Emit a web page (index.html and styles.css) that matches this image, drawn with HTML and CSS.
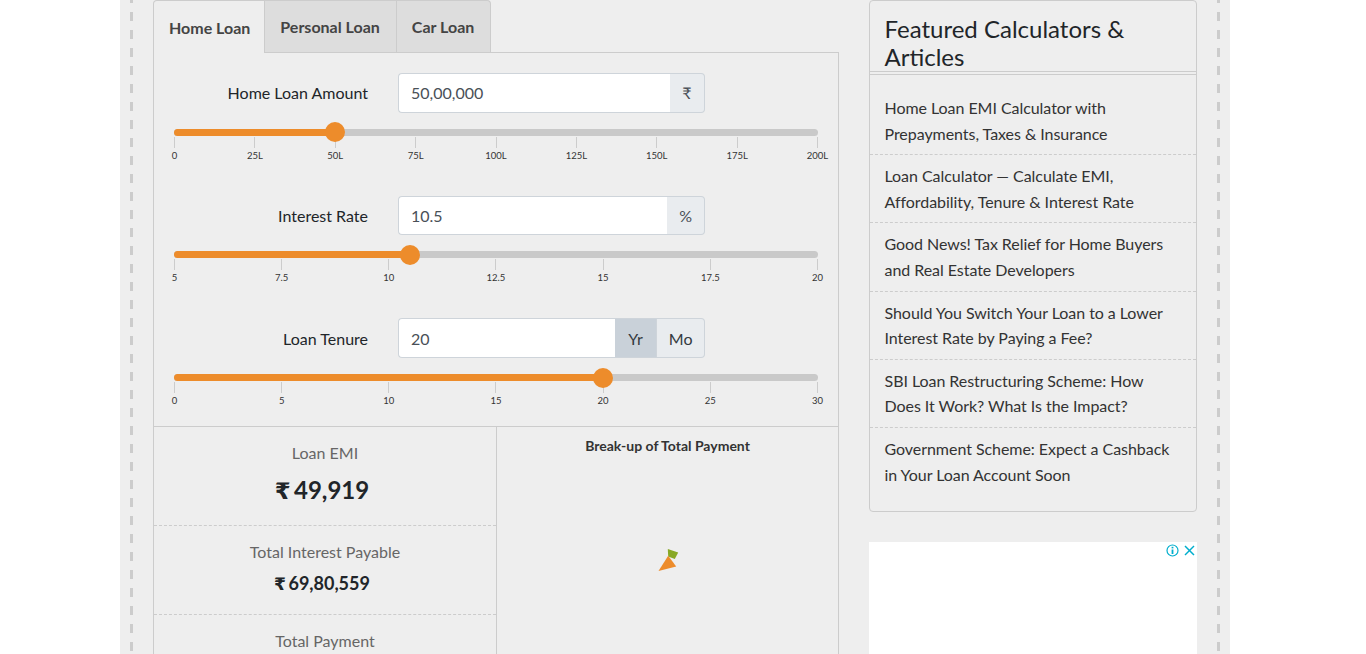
FILE: index.html
```html
<!DOCTYPE html>
<html lang="en">
<head>
  <meta charset="UTF-8" />
  <title>EMI Calculator</title>
  <link rel="stylesheet" href="styles.css">
</head>
<body>

  <div class="page">

    <div class="calc-col">
      <div class="tabs">
        <div class="tab active">Home Loan</div>
        <div class="tab">Personal Loan</div>
        <div class="tab">Car Loan</div>
      </div>

      <div class="panel">
        <div class="inputs">

          <div class="calc-row">
            <div class="field">
              <label class="field-label">Home Loan Amount</label>
              <div class="input-group">
                <input type="text" value="50,00,000" />
                <span class="addon addon-rupee">₹</span>
              </div>
            </div>
            <div class="slider">
              <div class="track">
                <div class="fill" style="width: 25%"></div>
                <div class="handle" style="left: 25%"></div>
              </div>
              <div class="scale">
                <span class="tick">0</span>
                <span class="tick">25L</span>
                <span class="tick">50L</span>
                <span class="tick">75L</span>
                <span class="tick">100L</span>
                <span class="tick">125L</span>
                <span class="tick">150L</span>
                <span class="tick">175L</span>
                <span class="tick">200L</span>
              </div>
            </div>
          </div>

          <div class="calc-row">
            <div class="field">
              <label class="field-label">Interest Rate</label>
              <div class="input-group">
                <input type="text" value="10.5" />
                <span class="addon">%</span>
              </div>
            </div>
            <div class="slider">
              <div class="track">
                <div class="fill" style="width: 36.67%"></div>
                <div class="handle" style="left: 36.67%"></div>
              </div>
              <div class="scale">
                <span class="tick">5</span>
                <span class="tick">7.5</span>
                <span class="tick">10</span>
                <span class="tick">12.5</span>
                <span class="tick">15</span>
                <span class="tick">17.5</span>
                <span class="tick">20</span>
              </div>
            </div>
          </div>

          <div class="calc-row">
            <div class="field">
              <label class="field-label">Loan Tenure</label>
              <div class="input-group">
                <input type="text" value="20" />
                <span class="addon addon-on">Yr</span>
                <span class="addon addon-mo">Mo</span>
              </div>
            </div>
            <div class="slider">
              <div class="track">
                <div class="fill" style="width: 66.67%"></div>
                <div class="handle" style="left: 66.67%"></div>
              </div>
              <div class="scale">
                <span class="tick">0</span>
                <span class="tick">5</span>
                <span class="tick">10</span>
                <span class="tick">15</span>
                <span class="tick">20</span>
                <span class="tick">25</span>
                <span class="tick">30</span>
              </div>
            </div>
          </div>

        </div>

        <div class="results">
          <div class="summary">
            <div class="result result-emi">
              <div class="result-label">Loan EMI</div>
              <div class="result-value"><span class="rupee">₹</span> 49,919</div>
            </div>
            <div class="result">
              <div class="result-label">Total Interest Payable</div>
              <div class="result-value"><span class="rupee">₹</span> 69,80,559</div>
            </div>
            <div class="result result-last">
              <div class="result-label">Total Payment</div>
            </div>
          </div>
          <div class="chart">
            <div class="chart-title">Break-up of Total Payment</div>
            <svg class="pie" width="22" height="25" viewBox="0 0 22 25">
              <polygon fill="#88a825" points="10.8,1 21.2,4.4 17.8,11 11.2,8.4" />
              <polygon fill="#ed8c2b" points="11.2,7.7 19.2,18.4 1.5,23" />
            </svg>
          </div>
        </div>
      </div>
    </div>

    <div class="side-col">
      <div class="featured">
        <h3 class="featured-title">Featured Calculators &amp; Articles</h3>
        <ul class="featured-list">
          <li>Home Loan EMI Calculator with Prepayments, Taxes &amp; Insurance</li>
          <li>Loan Calculator — Calculate EMI, Affordability, Tenure &amp; Interest Rate</li>
          <li>Good News! Tax Relief for Home Buyers and Real Estate Developers</li>
          <li>Should You Switch Your Loan to a Lower Interest Rate by Paying a Fee?</li>
          <li>SBI Loan Restructuring Scheme: How Does It Work? What Is the Impact?</li>
          <li>Government Scheme: Expect a Cashback in Your Loan Account Soon</li>
        </ul>
      </div>

      <div class="ad">
        <div class="ad-icons">
          <svg width="13" height="13" viewBox="0 0 13 13" fill="none" stroke="#00aecd">
            <circle cx="6.5" cy="6.5" r="5.5" stroke-width="1.2" />
            <line x1="6.5" y1="5.5" x2="6.5" y2="10" stroke-width="1.8" />
            <line x1="6.5" y1="2.8" x2="6.5" y2="4.4" stroke-width="1.8" />
          </svg>
          <svg width="11" height="11" viewBox="0 0 11 11" fill="none" stroke="#00aecd" stroke-width="1.5">
            <line x1="1" y1="1" x2="10" y2="10" />
            <line x1="10" y1="1" x2="1" y2="10" />
          </svg>
        </div>
      </div>
    </div>

  </div>

</body>
</html>
```

FILE: styles.css
```css
html, body {
  margin: 0;
  height: 100%;
  overflow: hidden;
  background-color: white;
}
body {
  width: 1350px;
  font-family: Lato, "Noto Sans", sans-serif;
  font-size: 16px;
  color: #212529;
}
.page {
  box-sizing: border-box;
  width: 1110px;
  height: 654px;
  margin: 0 auto;
  padding: 0 33px;
  display: flex;
  gap: 30px;
  overflow: hidden;
  background-color: #eeeeee;
  background-image:
    linear-gradient(#cccccc 9px, transparent 9px),
    linear-gradient(#cccccc 9px, transparent 9px);
  background-size: 3px 18px;
  background-position: 10px 12px, 1097px 12px;
  background-repeat: repeat-y;
}

.calc-col {
  width: 686px;
  flex-shrink: 0;
}
.tabs {
  display: flex;
}
.tab {
  box-sizing: border-box;
  height: 52px;
  padding: 0 16px 0 15px;
  display: flex;
  align-items: center;
  font-weight: bold;
  color: #444444;
  background-color: #dddddd;
  border: 1px solid #cccccc;
  border-left: none;
  border-bottom: none;
  border-radius: 0 4px 0 0;
}
.tab:nth-child(2) {
  border-radius: 0;
}
.tab.active {
  height: 53px;
  margin-bottom: -1px;
  padding-right: 14px;
  position: relative;
  background-color: #eeeeee;
  border-left: 1px solid #cccccc;
  border-radius: 4px 0 0 0;
}
.panel {
  border: 1px solid #cccccc;
  box-sizing: border-box;
}
.inputs {
  padding: 20px 20px 0;
}
.calc-row {
  height: 122.5px;
}
.calc-row:last-child {
  height: 108px;
}
.calc-row:last-child .field {
  height: 40px;
}
.field {
  display: flex;
  align-items: center;
  height: 39.5px;
}
.field-label {
  width: 194px;
  text-align: right;
  padding-right: 30px;
}
.input-group {
  width: 307px;
  height: 100%;
  display: flex;
}
.input-group input {
  flex: 1;
  min-width: 0;
  box-sizing: border-box;
  height: 100%;
  padding: 0 12px;
  font-family: inherit;
  font-size: 16px;
  color: #495057;
  background-color: white;
  border: 1px solid #ced4da;
  border-right: none;
  border-radius: 4px 0 0 4px;
}
.addon {
  display: flex;
  align-items: center;
  padding: 0 12px;
  color: #495057;
  background-color: #e9ecef;
  border: 1px solid #ced4da;
  border-left: none;
}
.addon:last-child {
  border-radius: 0 4px 4px 0;
}
.addon-rupee {
  padding: 0 12.5px;
}
.addon-on {
  padding: 0 13.5px;
  color: #343a40;
  background-color: #c9d1d9;
}
.addon-mo {
  padding: 0 11.5px;
  color: #343a40;
}

.slider {
  margin-top: 16px;
}
.track {
  position: relative;
  height: 7px;
  background-color: #c9c9c9;
  border-radius: 4px;
}
.fill {
  height: 100%;
  background-color: #ed8c2b;
  border-radius: 4px 0 0 4px;
}
.handle {
  position: absolute;
  top: -6.5px;
  width: 20px;
  height: 20px;
  margin-left: -10px;
  background-color: #ed8c2b;
  border-radius: 50%;
}
.scale {
  display: flex;
  justify-content: space-between;
  margin-top: 1px;
}
.tick {
  width: 1px;
  display: flex;
  justify-content: center;
  white-space: nowrap;
  padding-top: 12px;
  font-size: 9.5px;
  line-height: 13px;
  color: #333333;
  background: linear-gradient(#cccccc, #cccccc) no-repeat top / 1px 11px;
}

.results {
  display: flex;
  border-top: 1px solid #cccccc;
}
.summary {
  width: 342px;
  flex-shrink: 0;
  border-right: 1px solid #cccccc;
}
.result {
  height: 89px;
  box-sizing: border-box;
  padding-top: 14px;
  text-align: center;
  border-bottom: 1px dashed #cccccc;
}
.result-emi {
  height: 99px;
}
.result-last {
  border-bottom: none;
}
.result-label {
  color: #666666;
  line-height: 24px;
}
.result-value {
  margin-top: 6px;
  padding-right: 6px;
  font-size: 18px;
  font-weight: bold;
  line-height: 26px;
}
.result-emi .result-value {
  margin-top: 7px;
  font-size: 24px;
  line-height: 36px;
}
.rupee {
  font-family: "DejaVu Sans", sans-serif;
  font-size: 0.95em;
  margin-right: -0.11em;
}
.chart {
  flex: 1;
  text-align: center;
}
.chart-title {
  margin-top: 10px;
  font-size: 14px;
  font-weight: bold;
  line-height: 18px;
  color: #333333;
}
.pie {
  display: block;
  margin: 93px auto 0;
}

.side-col {
  width: 328px;
  flex-shrink: 0;
}
.featured {
  box-sizing: border-box;
  border: 1px solid #cccccc;
  border-radius: 4px;
  height: 512px;
}
.featured-title {
  margin: 0;
  padding: 14px 15px 0 14.5px;
  height: 56px;
  font-size: 24px;
  font-weight: normal;
  line-height: 28px;
  border-bottom: 1px solid #cccccc;
}
.featured-list {
  list-style: none;
  margin: 2px 0 0;
  padding: 12px 0 0;
  border-top: 1px solid #cccccc;
}
.featured-list li {
  padding: 8px 14.5px;
  line-height: 25.6px;
  letter-spacing: -0.05px;
  color: #333333;
  border-bottom: 1px dashed #cccccc;
}
.featured-list li:last-child {
  border-bottom: none;
}
.ad {
  position: relative;
  height: 300px;
  margin-top: 30px;
  background-color: white;
}
.ad-icons {
  position: absolute;
  top: 2px;
  right: 2px;
  display: flex;
  align-items: center;
  gap: 5px;
}
```
